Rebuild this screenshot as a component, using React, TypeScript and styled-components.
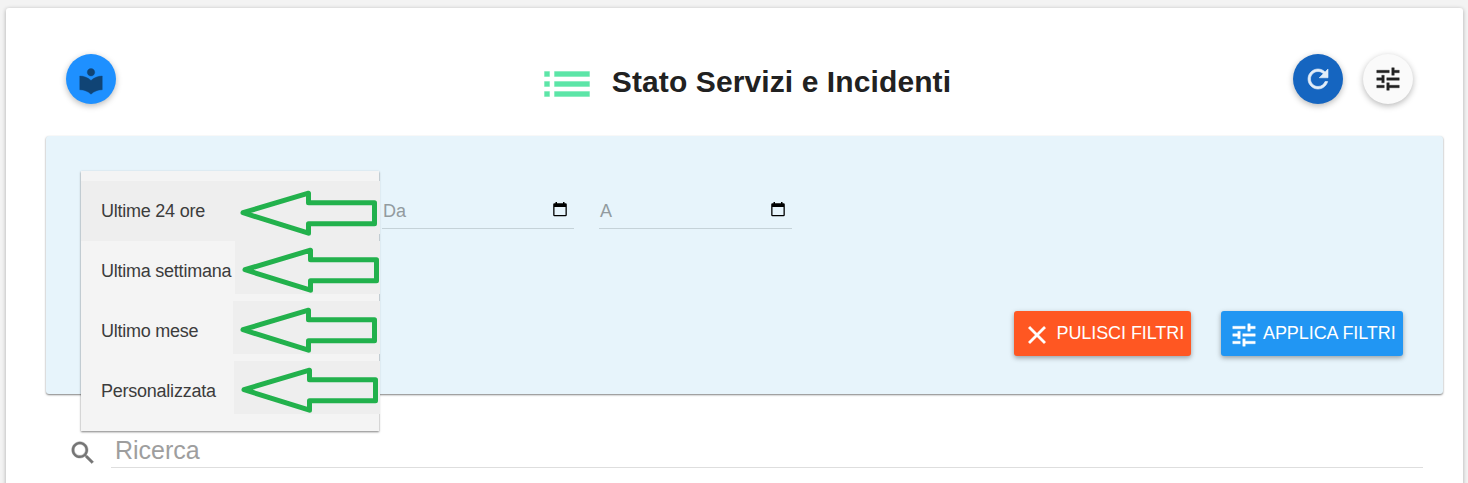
import React from "react";
import styled, { createGlobalStyle } from "styled-components";

const GlobalStyle = createGlobalStyle`
  *, *::before, *::after { box-sizing: border-box; }
  html, body { margin: 0; height: 100%; overflow: hidden; }
  body {
    background: #f3f3f3;
    color: #212121;
    font-family: "Liberation Sans", Arial, sans-serif;
  }
`;

const Page = styled.div`
  height: 483px;
  padding: 8px 5px 0 6px;
  overflow: hidden;
`;

const Card = styled.main`
  height: 520px;
  padding: 46px 20px 0 40px;
  background: #fff;
  border-radius: 3px;
  box-shadow: 0 1px 4px rgba(0, 0, 0, 0.3);
`;

const Header = styled.header`
  display: flex;
  justify-content: space-between;
  align-items: flex-start;
  height: 82px;
  padding: 0 30px 0 20px;
`;

const RoundButton = styled.button<{ $bg: string; $fg: string; $drop?: number }>`
  display: flex;
  justify-content: center;
  width: 50px;
  height: 50px;
  padding: ${(p) => 10 + (p.$drop ?? 0)}px 0 0;
  border: 0;
  border-radius: 50%;
  background: ${(p) => p.$bg};
  color: ${(p) => p.$fg};
  box-shadow: 0 2px 6px rgba(0, 0, 0, 0.28);
`;

const HeaderActions = styled.div`
  display: flex;
  gap: 20px;
`;

const Heading = styled.div`
  display: flex;
  align-items: flex-start;
  gap: 15px;
  margin-left: 79px;
`;

const Title = styled.h1`
  margin: 10px 0 0;
  font-size: 30px;
  line-height: 35px;
  font-weight: 700;
  letter-spacing: 0.1px;
  white-space: nowrap;
`;

const Glyph = styled.svg<{ $size?: number }>`
  display: block;
  flex: none;
  width: ${(p) => p.$size ?? 30}px;
  height: ${(p) => p.$size ?? 30}px;
  fill: currentColor;
`;

const FilterPanel = styled.section`
  position: relative;
  display: flex;
  flex-direction: column;
  justify-content: space-between;
  height: 258px;
  padding: 55px 40px 38px 336px;
  background: #e7f4fb;
  border-radius: 3px;
  box-shadow: 0 1px 2px rgba(0, 0, 0, 0.5);
`;

const Fields = styled.div`
  display: flex;
  gap: 25px;
`;

const DateField = styled.label<{ $width: number }>`
  display: flex;
  justify-content: space-between;
  align-items: flex-start;
  width: ${(p) => p.$width}px;
  height: 38px;
  padding: 10px 6px 0 1px;
  border-bottom: 1px solid #c5d2d8;
  color: #929b9f;
  font-size: 18px;
  line-height: 20px;
`;

const CalendarGlyph = styled.svg`
  display: block;
  width: 15px;
  height: 16px;
  color: #000;
`;

const Actions = styled.div`
  display: flex;
  justify-content: flex-end;
  gap: 30px;
`;

const ActionButton = styled.button<{ $bg: string; $width: number; $gap: number }>`
  display: flex;
  align-items: flex-start;
  gap: ${(p) => p.$gap}px;
  width: ${(p) => p.$width}px;
  height: 45px;
  padding: 9px 0 0 8px;
  border: 0;
  border-radius: 3px;
  background: ${(p) => p.$bg};
  color: #fff;
  font: 18px/26px "Liberation Sans", Arial, sans-serif;
  letter-spacing: -0.08px;
  white-space: nowrap;
  box-shadow: 0 2px 5px rgba(0, 0, 0, 0.35);
`;

const Menu = styled.ul`
  position: absolute;
  top: 35px;
  left: 35px;
  z-index: 1;
  width: 298px;
  margin: 0;
  padding: 10px 0;
  list-style: none;
  background: #f4f4f4;
  box-shadow: 0 1px 2px rgba(0, 0, 0, 0.5);
`;

const MenuItem = styled.li<{ $active?: boolean }>`
  display: flex;
  justify-content: space-between;
  height: 60px;
  padding-left: 20px;
  background: ${(p) => (p.$active ? "#eee" : "transparent")};
  color: #3c3c3c;
  font-size: 18px;
  letter-spacing: -0.24px;
  line-height: 60px;
  white-space: nowrap;
`;

const Callout = styled.span<{ $width: number }>`
  display: block;
  flex: none;
  width: ${(p) => p.$width}px;
  height: 53px;
  margin-right: -1px;
  background: #eee;
`;

const ArrowGlyph = styled.svg`
  display: block;
  overflow: visible;
  fill: none;
  stroke: #22b14c;
  stroke-width: 5;
  stroke-linejoin: round;
`;

const SearchBar = styled.label`
  display: flex;
  align-items: flex-start;
  gap: 13px;
  margin: 44px 20px 0 22px;
  color: #757575;
`;

const SearchInput = styled.span`
  flex: 1;
  height: 30px;
  padding-left: 4px;
  border-bottom: 1px solid #dedede;
  color: #9e9e9e;
  font-size: 25px;
  line-height: 24px;
`;

const paths = {
  library:
    "M12 11.55C9.64 9.35 6.48 8 3 8v11c3.48 0 6.64 1.35 9 3.55 2.36-2.19 5.52-3.55 9-3.55V8c-3.48 0-6.64 1.35-9 3.55zM12 8c1.66 0 3-1.34 3-3s-1.34-3-3-3-3 1.34-3 3 1.34 3 3 3z",
  list: "M3 13h2v-2H3v2zm0 4h2v-2H3v2zm0-8h2V7H3v2zm4 4h14v-2H7v2zm0 4h14v-2H7v2zM7 7v2h14V7H7z",
  refresh:
    "M17.65 6.35C16.2 4.9 14.21 4 12 4c-4.42 0-7.99 3.58-7.99 8s3.57 8 7.99 8c3.73 0 6.84-2.55 7.73-6h-2.08c-.82 2.33-3.04 4-5.65 4-3.31 0-6-2.69-6-6s2.69-6 6-6c1.66 0 3.14.69 4.22 1.78L13 11h7V4l-2.35 2.35z",
  tune: "M3 17v2h6v-2H3zM3 5v2h10V5H3zm10 16v-2h8v-2h-8v-2h-2v6h2zM7 9v2H3v2h4v2h2V9H7zm14 4v-2H11v2h10zm-6-4h2V7h4V5h-4V3h-2v6z",
  close:
    "M19 6.41L17.59 5 12 10.59 6.41 5 5 6.41 10.59 12 5 17.59 6.41 19 12 13.41 17.59 19 19 17.59 13.41 12z",
  search:
    "M15.5 14h-.79l-.28-.27C15.41 12.59 16 11.11 16 9.5 16 5.91 13.09 3 9.5 3S3 5.91 3 9.5 5.91 16 9.5 16c1.61 0 3.09-.59 4.23-1.57l.27.28v.79l5 4.99L20.49 19l-4.99-5zm-6 0C7.01 14 5 11.99 5 9.5S7.01 5 9.5 5 14 7.01 14 9.5 11.99 14 9.5 14z",
};

function Icon({ name, size, weight = 0.3 }: { name: keyof typeof paths; size?: number; weight?: number }) {
  return (
    <Glyph viewBox="0 0 24 24" $size={size} stroke="currentColor" strokeWidth={weight} aria-hidden="true">
      <path d={paths[name]} />
    </Glyph>
  );
}

function Calendar() {
  return (
    <CalendarGlyph viewBox="0 0 15 16" aria-hidden="true">
      <path
        fill="currentColor"
        fillRule="evenodd"
        d="M2.5 1H4v1.2h6V1h1.5v1.2h1a1.3 1.3 0 0 1 1.3 1.3v10.4a1.3 1.3 0 0 1-1.3 1.3h-11A1.3 1.3 0 0 1 .2 13.900V3.500a1.3 1.3 0 0 1 1.3-1.3h1zM1.5 6v8h11V6z"
      />
    </CalendarGlyph>
  );
}

const periods = [
  { label: "Ultime 24 ore", active: true, width: 145, dx: 8, dy: 31.7 },
  { label: "Ultima settimana", width: 145, dx: 10, dy: 28.7 },
  { label: "Ultimo mese", width: 147, dx: 10, dy: 28.7 },
  { label: "Personalizzata", width: 146, dx: 10, dy: 28.7 },
];

export default function App() {
  return (
    <>
      <GlobalStyle />
      <Page>
        <Card>
          <Header>
            <RoundButton $bg="#1e90ff" $fg="#104475" $drop={2} aria-label="Guida">
              <Icon name="library" />
            </RoundButton>
            <Heading>
              <Glyph viewBox="0 0 24 24" $size={60} color="#5ce5a7" stroke="currentColor" strokeWidth={0.15}>
                <path d={paths.list} />
              </Glyph>
              <Title>Stato Servizi e Incidenti</Title>
            </Heading>
            <HeaderActions>
              <RoundButton $bg="#1565c0" $fg="#e2edf8" aria-label="Aggiorna">
                <Icon name="refresh" weight={0.5} />
              </RoundButton>
              <RoundButton $bg="#fafafa" $fg="#212121" aria-label="Filtri">
                <Icon name="tune" />
              </RoundButton>
            </HeaderActions>
          </Header>
          <FilterPanel>
            <Menu>
              {periods.map((p) => (
                <MenuItem key={p.label} $active={p.active}>
                  {p.label}
                  <Callout $width={p.width}>
                    <ArrowGlyph width={p.width} height="53" aria-hidden="true">
                      <path
                        transform={`translate(${p.dx} ${p.dy})`}
                        d="M0 0L65.5-19.5V-10H131.5V11H65.5V20.5Z"
                      />
                    </ArrowGlyph>
                  </Callout>
                </MenuItem>
              ))}
            </Menu>
            <Fields>
              <DateField $width={192}>
                Da
                <Calendar />
              </DateField>
              <DateField $width={193}>
                A
                <Calendar />
              </DateField>
            </Fields>
            <Actions>
              <ActionButton $bg="#ff5722" $width={177} $gap={4.5}>
                <Icon name="close" />
                PULISCI FILTRI
              </ActionButton>
              <ActionButton $bg="#2196f3" $width={182} $gap={4}>
                <Icon name="tune" />
                APPLICA FILTRI
              </ActionButton>
            </Actions>
          </FilterPanel>
          <SearchBar>
            <Icon name="search" />
            <SearchInput>Ricerca</SearchInput>
          </SearchBar>
        </Card>
      </Page>
    </>
  );
}
